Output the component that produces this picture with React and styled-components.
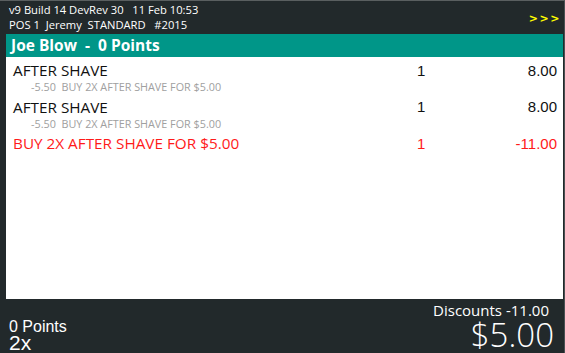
import React from "react";
import styled, { createGlobalStyle } from "styled-components";

const Global = createGlobalStyle`
  html, body { margin: 0; padding: 0; background: #22292b; }
  body { font-family: "Open Sans", "Noto Sans", sans-serif; }
`;

const Frame = styled.div`
  width: 565px;
  height: 353px;
  box-sizing: border-box;
  background: #22292b;
  border-top: 1px solid #5a5f60;
  border-right: 1px solid #4a5052;
  padding: 0 1px 0 6px;
  display: flex;
  flex-direction: column;
  overflow: hidden;
`;

const Header = styled.div`
  height: 33px;
  flex-shrink: 0;
  display: flex;
  justify-content: space-between;
  align-items: flex-start;
  color: #ffffff;
`;

const HeaderInfo = styled.div`
  padding: 1px 0 0 3px;
  font-size: 11.2px;
  line-height: 15px;
  white-space: pre;
`;

const Arrows = styled.div`
  margin: 11px 2px 0 0;
  color: #ffff00;
  font-family: "DejaVu Sans", sans-serif;
  font-size: 11px;
  line-height: 13px;
  font-weight: bold;
  letter-spacing: 1.5px;
`;

const CustomerBar = styled.div`
  height: 23px;
  flex-shrink: 0;
  background: #009688;
  color: #ffffff;
  font-weight: 700;
  font-size: 15.5px;
  line-height: 22px;
  padding-left: 5px;
  white-space: pre;
`;

const ItemList = styled.div`
  flex: 1;
  background: #ffffff;
  padding: 3px 6px 0 7px;
`;

const Row = styled.div`
  display: grid;
  grid-template-columns: 1fr 40px 100px;
  align-items: center;
  height: 18px;
  font-size: 15.3px;
  color: ${(p) => (p.$discount ? "#ff1a1a" : "#111111")};
`;

const Desc = styled.span`
  white-space: nowrap;
`;

const Num = styled.span`
  font-family: "Liberation Sans", Arial, sans-serif;
  font-size: 15px;
  text-align: ${(p) => (p.$right ? "right" : "left")};
`;

const SubLine = styled.div`
  height: 18.5px;
  line-height: 18.5px;
  padding-left: 18px;
  font-size: 10.8px;
  color: #a0a0a0;
  white-space: pre;
`;

const Footer = styled.div`
  height: 54px;
  flex-shrink: 0;
  display: flex;
  justify-content: space-between;
  align-items: flex-end;
  color: #ffffff;
  padding: 0 9px 0 3px;
`;

const FooterLeft = styled.div`
  font-family: "Liberation Sans", Arial, sans-serif;
  display: flex;
  flex-direction: column;
  margin-bottom: 2px;
`;

const Points = styled.div`
  font-size: 16px;
  line-height: 14px;
`;

const Multiplier = styled.div`
  font-size: 21px;
  line-height: 17px;
`;

const FooterRight = styled.div`
  display: flex;
  flex-direction: column;
  align-items: flex-end;
  margin-bottom: 1px;
`;

const Discounts = styled.div`
  font-size: 15px;
  line-height: 16px;
  margin-right: 5px;
`;

const Total = styled.div`
  font-size: 33px;
  font-weight: 300;
  line-height: 34px;
`;

const items = [
  { name: "AFTER SHAVE", qty: "1", price: "8.00", sub: "-5.50  BUY 2X AFTER SHAVE FOR $5.00" },
  { name: "AFTER SHAVE", qty: "1", price: "8.00", sub: "-5.50  BUY 2X AFTER SHAVE FOR $5.00" },
  { name: "BUY 2X AFTER SHAVE FOR $5.00", qty: "1", price: "-11.00", discount: true },
];

export default function App() {
  return (
    <>
      <Global />
      <Frame>
        <Header>
          <HeaderInfo>
            {"v9 Build 14 DevRev 30   11 Feb 10:53"}
            {"\n"}
            {"POS 1  Jeremy  STANDARD   #2015"}
          </HeaderInfo>
          <Arrows>&gt;&gt;&gt;</Arrows>
        </Header>
        <CustomerBar>{"Joe Blow  -  0 Points"}</CustomerBar>
        <ItemList>
          {items.map((it, i) => (
            <React.Fragment key={i}>
              <Row $discount={it.discount}>
                <Desc>{it.name}</Desc>
                <Num>{it.qty}</Num>
                <Num $right>{it.price}</Num>
              </Row>
              {it.sub && <SubLine>{it.sub}</SubLine>}
            </React.Fragment>
          ))}
        </ItemList>
        <Footer>
          <FooterLeft>
            <Points>0 Points</Points>
            <Multiplier>2x</Multiplier>
          </FooterLeft>
          <FooterRight>
            <Discounts>Discounts -11.00</Discounts>
            <Total>$5.00</Total>
          </FooterRight>
        </Footer>
      </Frame>
    </>
  );
}
